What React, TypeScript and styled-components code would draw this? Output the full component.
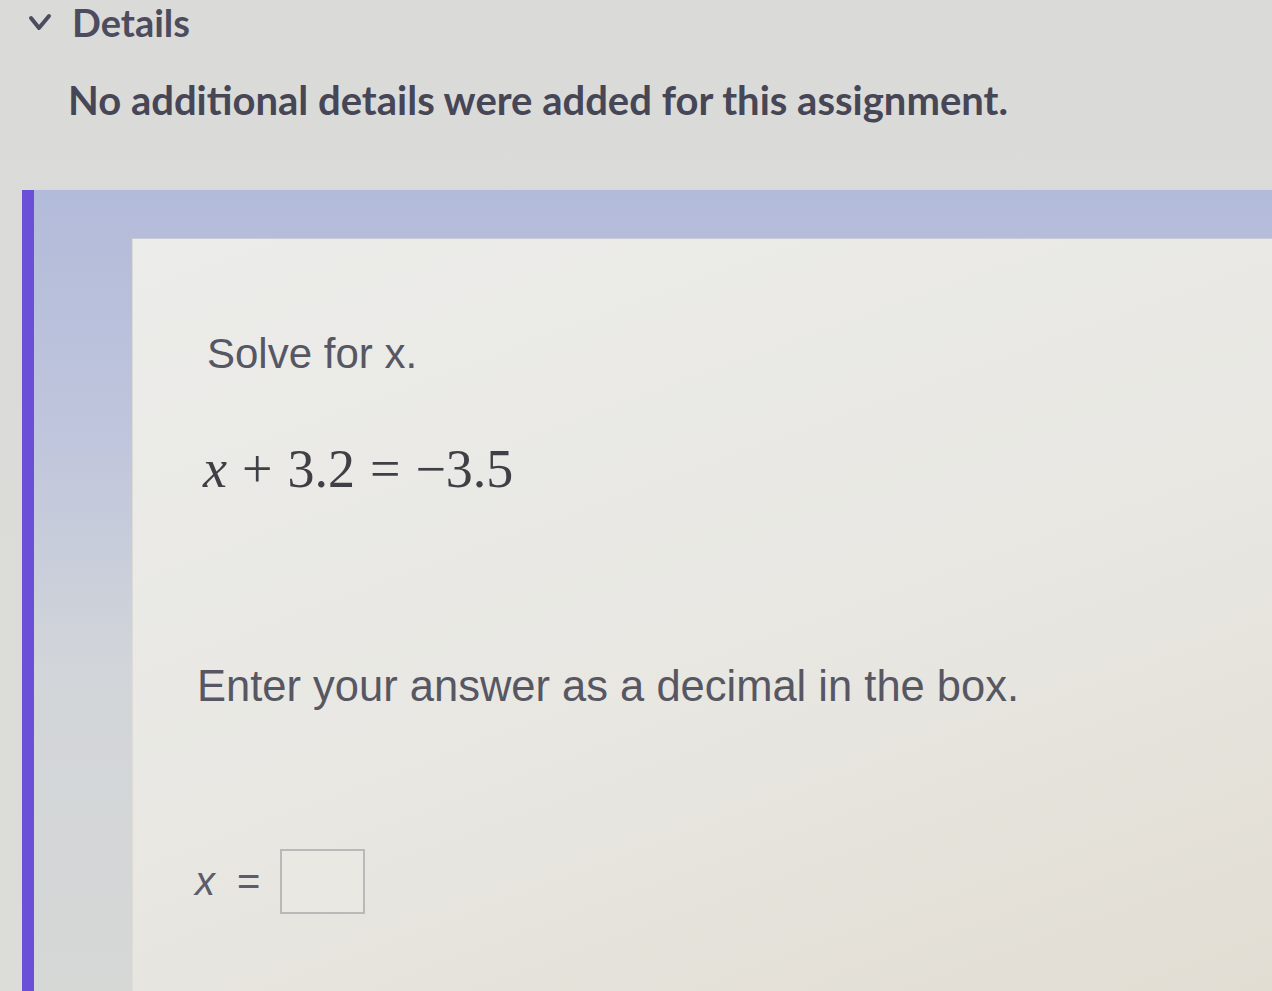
import React from "react";
import styled, { createGlobalStyle } from "styled-components";

const GlobalStyle = createGlobalStyle`
  html, body {
    margin: 0;
    padding: 0;
  }
  body {
    background: #d9dad7;
    font-family: Lato, "Liberation Sans", sans-serif;
    overflow: hidden;
  }
`;

const Page = styled.main`
  width: 1272px;
  height: 991px;
  display: flex;
  flex-direction: column;
  background: linear-gradient(180deg, #dadbd9 0%, #dcdcd8 100%);
`;

const DetailsHeader = styled.button`
  display: flex;
  align-items: center;
  gap: 20px;
  margin: 0;
  padding: 2px 0 0 28px;
  height: 42px;
  line-height: 40px;
  background: none;
  border: none;
  font-family: Lato, "Liberation Sans", sans-serif;
  font-weight: 700;
  font-size: 38px;
  color: #4d4c5e;
  cursor: pointer;
`;

const DetailsNote = styled.p`
  margin: 34px 0 0 68px;
  font-weight: 700;
  font-size: 40px;
  color: #474656;
`;

const QuestionPanel = styled.section`
  flex: 1;
  display: flex;
  flex-direction: column;
  margin: 66px 0 0 22px;
  padding: 48px 0 0 98px;
  border-left: 12px solid #6b4fd6;
  background: linear-gradient(180deg, #b3bbda 0%, #bfc5dc 30%, #d2d5d9 60%, #d6d8d6 100%);
`;

const QuestionCard = styled.div`
  flex: 1;
  display: flex;
  flex-direction: column;
  padding: 90px 0 0 74px;
  border-top: 1px solid #c9cbd6;
  border-left: 1px solid #dedbd6;
  background: linear-gradient(160deg, #ececea 0%, #e8e7e2 55%, #e2ddd3 100%);
  font-family: "Liberation Sans", Arial, sans-serif;
  color: #575763;
`;

const Prompt = styled.p<{ size: number; top: number; shift: number }>`
  margin: ${(p) => p.top}px 0 0 ${(p) => p.shift}px;
  font-size: ${(p) => p.size}px;
  line-height: 1.2;
`;

const Equation = styled.div`
  margin: 58px 0 0 -4px;
  font-family: "Liberation Serif", "DejaVu Serif", serif;
  font-size: 54px;
  line-height: 1.2;
  color: #3f3f46;
  display: flex;
  align-items: baseline;
`;

const Var = styled.i`
  font-style: italic;
`;

const Op = styled.span`
  margin: 0 15px;
`;

const AnswerRow = styled.label`
  display: flex;
  align-items: center;
  gap: 22px;
  margin: 137px 0 0 -12px;
  font-size: 40px;
  color: #5c5c6c;
`;

const AnswerVar = styled.span`
  font-style: italic;
`;

const AnswerBox = styled.input`
  width: 85px;
  height: 65px;
  box-sizing: border-box;
  border: 2px solid #b9b9b9;
  background: #e9e8e3;
  margin-left: -2px;
`;

const Chevron = () => (
  <svg width="24" height="20" viewBox="0 0 24 20" aria-hidden="true">
    <polyline
      points="3,6 11,16 21,4"
      fill="none"
      stroke="#4d4c5e"
      strokeWidth="4"
      strokeLinecap="round"
      strokeLinejoin="round"
    />
  </svg>
);

const App = () => {
  return (
    <Page>
      <GlobalStyle />
      <DetailsHeader type="button">
        <Chevron />
        Details
      </DetailsHeader>
      <DetailsNote>No additional details were added for this assignment.</DetailsNote>
      <QuestionPanel>
        <QuestionCard>
          <Prompt size={42} top={0} shift={0}>
            Solve for x.
          </Prompt>
          <Equation>
            <Var>x</Var>
            <Op>+</Op>
            3.2
            <Op>=</Op>
            −3.5
          </Equation>
          <Prompt size={43.5} top={158} shift={-10}>
            Enter your answer as a decimal in the box.
          </Prompt>
          <AnswerRow>
            <AnswerVar>x</AnswerVar>=
            <AnswerBox type="text" aria-label="x" />
          </AnswerRow>
        </QuestionCard>
      </QuestionPanel>
    </Page>
  );
};

export default App;
